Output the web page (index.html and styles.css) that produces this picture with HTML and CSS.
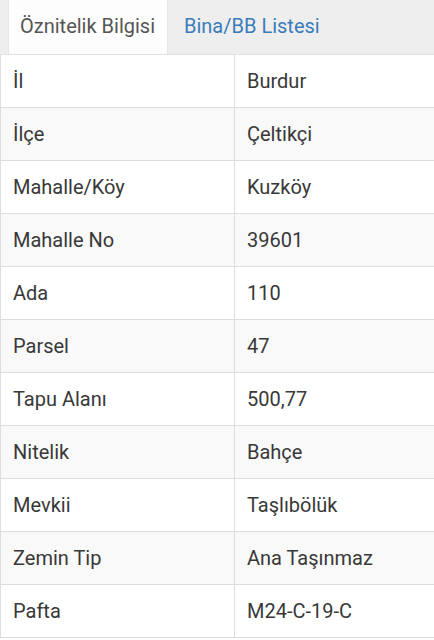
FILE: index.html
```html
<!DOCTYPE html>
<html lang="tr">
<head>
<meta charset="utf-8">
<link rel="stylesheet" href="styles.css">
</head>
<body>
<div class="tabs">
  <div class="tab active">Öznitelik Bilgisi</div>
  <div class="tab link">Bina/BB Listesi</div>
</div>
<table class="info">
  <tr><td>İl</td><td>Burdur</td></tr>
  <tr><td>İlçe</td><td>Çeltikçi</td></tr>
  <tr><td>Mahalle/Köy</td><td>Kuzköy</td></tr>
  <tr><td>Mahalle No</td><td>39601</td></tr>
  <tr><td>Ada</td><td>110</td></tr>
  <tr><td>Parsel</td><td>47</td></tr>
  <tr><td>Tapu Alanı</td><td>500,77</td></tr>
  <tr><td>Nitelik</td><td>Bahçe</td></tr>
  <tr><td>Mevkii</td><td>Taşlıbölük</td></tr>
  <tr><td>Zemin Tip</td><td>Ana Taşınmaz</td></tr>
  <tr><td>Pafta</td><td>M24-C-19-C</td></tr>
</table>
</body>
</html>
```
FILE: styles.css
```css
html, body {
  margin: 0;
  padding: 0;
  background: #ffffff;
  font-family: Roboto, "Noto Sans", sans-serif;
}
.tabs {
  display: flex;
  height: 54px;
  background: #eeeeee;
  border-bottom: 1px solid #e2e2e2;
  padding-left: 8px;
}
.tab {
  display: flex;
  align-items: center;
  font-size: 20px;
  white-space: nowrap;
  padding: 0 12px 3px;
  box-sizing: border-box;
}
.tab.active {
  background: #fdfdfd;
  color: #555555;
  border-left: 1px solid #e6e6e6;
  border-right: 1px solid #e6e6e6;
  width: 160px;
  padding: 0 0 3px 11px;
}
.tab.link {
  color: #3a7cba;
  padding-left: 16px;
}
.info {
  width: 100%;
  border-collapse: collapse;
  font-size: 20px;
  color: #383838;
}
.info td {
  height: 52px;
  padding: 0 0 0 12px;
  border-bottom: 1px solid #dddddd;
  vertical-align: middle;
}
.info td:first-child {
  width: 221px;
  padding-left: 12px;
  border-left: 1px solid #dddddd;
  border-right: 1px solid #dddddd;
}
.info tr:nth-child(even) td {
  background: #f9f9f9;
}
```
